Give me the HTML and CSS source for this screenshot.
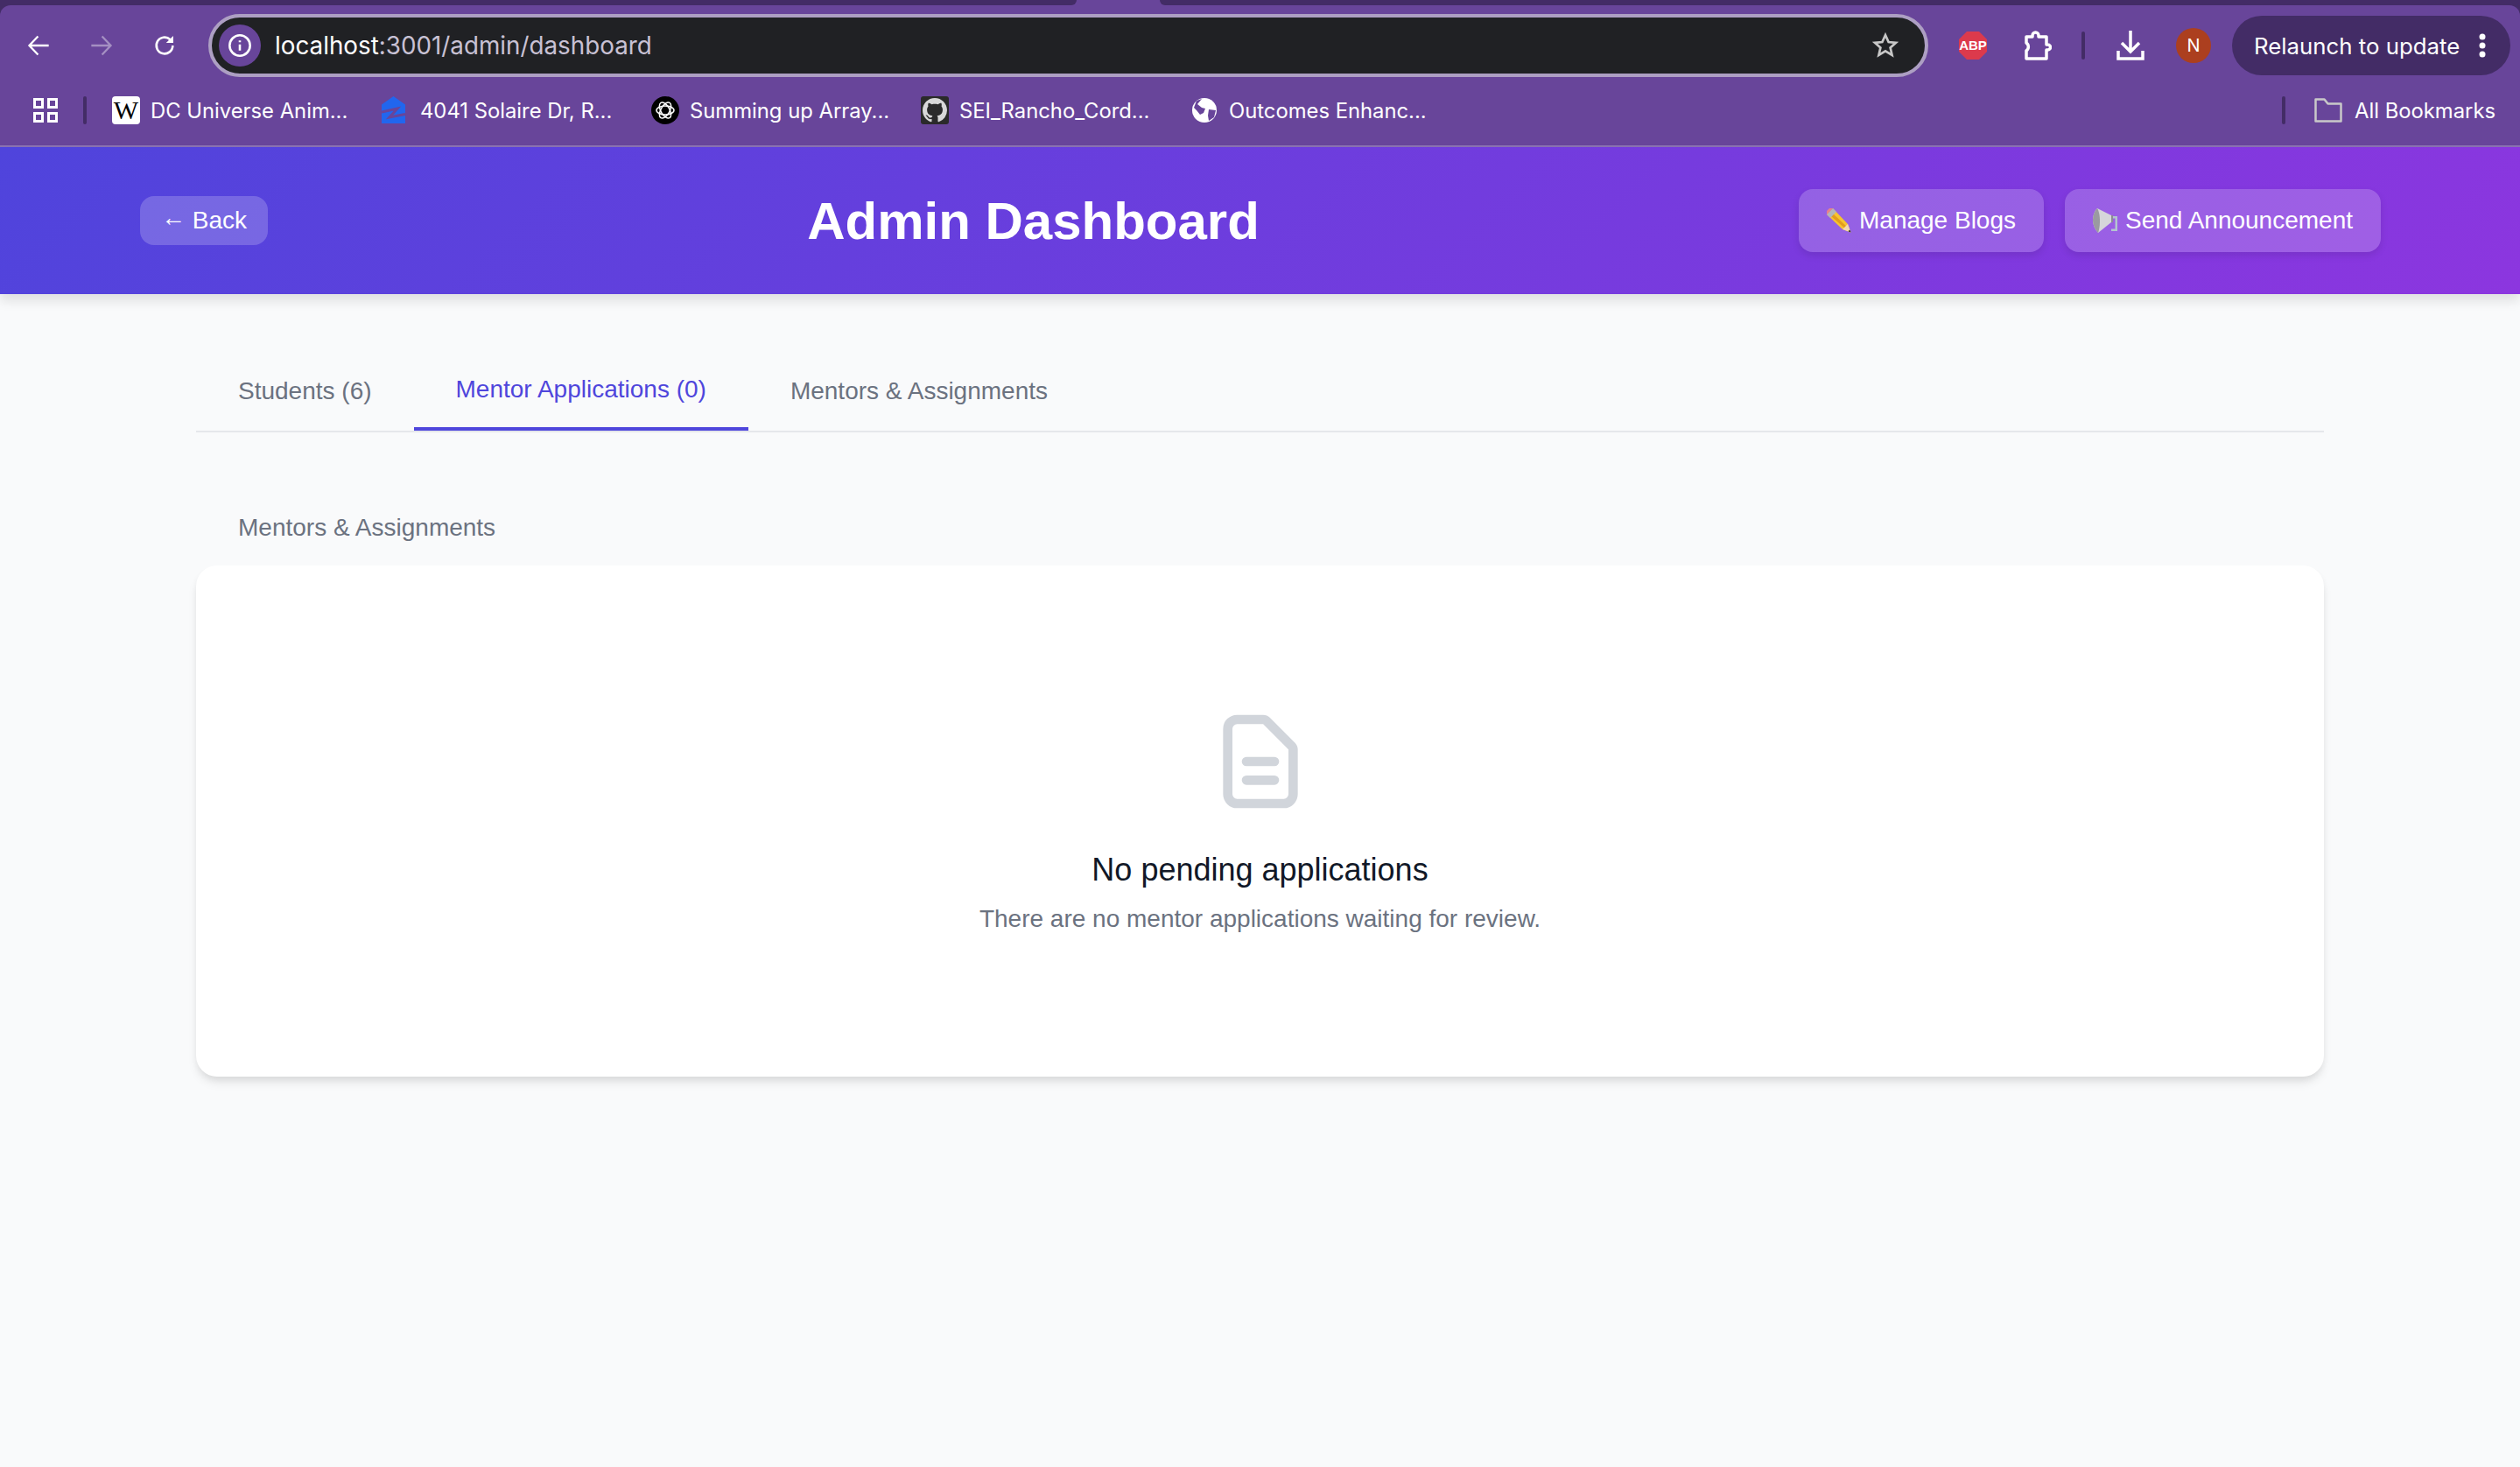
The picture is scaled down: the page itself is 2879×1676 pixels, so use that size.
FILE: index.html
```html
<!DOCTYPE html>
<html lang="en">
  <head>
    <meta charset="UTF-8" />
    <meta name="viewport" content="width=device-width, initial-scale=1.0" />
    <title>Admin Dashboard</title>
    <link rel="stylesheet" href="styles.css">
  </head>

  <body>
    <div class="browser">
      <div class="tab-strip">
        <div class="tab-strip-left"></div>
        <div class="tab-strip-right"></div>
      </div>

      <div class="toolbar">
        <div class="nav-row">
          <span class="nav-btn">
            <svg width="28" height="28" viewBox="0 0 24 24" fill="none" stroke="#fff" stroke-width="2"><path d="M22 12H3M11.5 3 3 12l8.5 9" /></svg>
          </span>
          <span class="nav-btn dim">
            <svg width="28" height="28" viewBox="0 0 24 24" fill="none" stroke="#fff" stroke-width="2"><path d="M2 12h19M12.5 3 21 12l-8.5 9" /></svg>
          </span>
          <span class="nav-btn">
            <svg width="28" height="28" viewBox="0 0 24 24" fill="none" stroke="#fff" stroke-width="2.2"><path d="M20 12a8 8 0 1 1-2.5-5.8L20 8.5" /><path d="M20.5 2.5v7h-7" fill="#fff" stroke="none" /></svg>
          </span>

          <div class="url-bar">
            <span class="site-info">
              <svg width="28" height="28" viewBox="0 0 24 24" fill="none" stroke="#fff" stroke-width="2.2"><circle cx="12" cy="12" r="10" /><path d="M12 11v6M12 7v1.8" /></svg>
            </span>
            <span class="url-text">localhost<span class="url-rest">:3001/admin/dashboard</span></span>
            <svg class="star" width="32" height="32" viewBox="0 0 24 24" fill="none" stroke="#c7c7c7" stroke-width="2"><path d="m12 3 2.7 6 6.3.6-4.8 4.2 1.5 6.4L12 16.8l-5.700 3.400 1.500-6.400L3 9.600 9.300 9z" /></svg>
          </div>

          <span class="nav-btn abp-btn">
            <svg width="36" height="36" viewBox="0 0 36 36"><polygon points="11,2 25,2 34,11 34,25 25,34 11,34 2,25 2,11" fill="#dc3a4c" /><text x="18" y="23" text-anchor="middle" class="abp-text">ABP</text></svg>
          </span>
          <span class="nav-btn ext-btn">
            <svg width="32" height="34" viewBox="0 0 32 34" fill="none" stroke="#fff" stroke-width="3.5"><path d="M3 7h7V5.500a3.500 3.500 0 0 1 7 0V7h9v9h1.500a3 3 0 0 1 0 6H26v10H3v-9a5.500 5.500 0 0 0 0-9z" stroke-linejoin="round" /></svg>
          </span>
          <span class="bar-divider"></span>
          <span class="nav-btn dl-btn">
            <svg width="34" height="36" viewBox="0 0 34 36" fill="none" stroke="#fff" stroke-width="3.5"><path d="M17 1v24M7 15l10 10 10-10M3 24v9h28v-9" /></svg>
          </span>
          <span class="avatar">N</span>
          <div class="relaunch">
            <span>Relaunch to update</span>
            <svg width="8" height="28" viewBox="0 0 8 28" fill="#fff"><circle cx="4" cy="4" r="3.5" /><circle cx="4" cy="14" r="3.5" /><circle cx="4" cy="24" r="3.5" /></svg>
          </div>
        </div>

        <div class="bookmarks">
          <svg class="apps-icon" width="28" height="28" viewBox="0 0 28 28" fill="none" stroke="#fff" stroke-width="3"><rect x="1.5" y="1.5" width="9" height="9" /><rect x="17.5" y="1.5" width="9" height="9" /><rect x="1.5" y="17.5" width="9" height="9" /><rect x="17.5" y="17.5" width="9" height="9" /></svg>
          <span class="bm-divider"></span>

          <div class="bm-list">
            <div class="bm">
              <span class="bm-wiki">W</span>
              <span>DC Universe Anim...</span>
            </div>
            <div class="bm">
              <svg width="32" height="32" viewBox="0 0 32 32"><path d="M13.5 0 27 9.500V31H0V9.500z" fill="#2166ee" /><path d="M0 18 18 14 9 24l18-3.500" fill="none" stroke="#68459a" stroke-width="3" /></svg>
              <span>4041 Solaire Dr, R...</span>
            </div>
            <div class="bm">
              <svg width="32" height="32" viewBox="0 0 32 32"><circle cx="16" cy="16" r="16" fill="#000" /><g fill="none" stroke="#fff" stroke-width="1.5"><ellipse cx="16" cy="16" rx="10" ry="5" /><ellipse cx="16" cy="16" rx="10" ry="5" transform="rotate(60 16 16)" /><ellipse cx="16" cy="16" rx="10" ry="5" transform="rotate(120 16 16)" /></g></svg>
              <span>Summing up Array...</span>
            </div>
            <div class="bm">
              <svg width="32" height="32" viewBox="0 0 32 32"><rect width="32" height="32" rx="3" fill="#2a2a2a" /><g transform="translate(2 2) scale(1.75)"><path fill="#d8d8d8" d="M8 0C3.580 0 0 3.580 0 8c0 3.540 2.290 6.530 5.470 7.590.4.070.55-.170.55-.380 0-.190-.010-.820-.010-1.490-2.010.370-2.530-.490-2.690-.940-.090-.230-.480-.940-.820-1.130-.280-.150-.680-.520-.010-.530.630-.010 1.080.580 1.230.820.720 1.210 1.870.870 2.330.660.070-.520.280-.870.510-1.070-1.780-.2-3.640-.890-3.640-3.950 0-.870.310-1.590.820-2.150-.080-.2-.360-1.020.080-2.120 0 0 .670-.210 2.200.820.640-.180 1.320-.270 2-.270.680 0 1.360.090 2 .270 1.530-1.040 2.200-.820 2.200-.820.440 1.100.160 1.920.080 2.120.510.560.820 1.270.820 2.150 0 3.070-1.870 3.750-3.650 3.950.290.250.540.730.540 1.480 0 1.070-.010 1.930-.010 2.200 0 .210.150.460.550.380A8.013 8.013 0 0016 8c0-4.420-3.580-8-8-8z" /></g></svg>
              <span>SEI_Rancho_Cord...</span>
            </div>
            <div class="bm">
              <svg width="32" height="32" viewBox="0 0 32 32"><circle cx="16" cy="16" r="14" fill="#fff" /><path d="M13 3 8 9l5 4 4 1-2 5-4 2-4-5-3-3 3-8zM21 15l8 1-2 8-6 4-1-6z" fill="#68459a" /></svg>
              <span>Outcomes Enhanc...</span>
            </div>
          </div>

          <span class="bm-divider right"></span>
          <div class="bm all-bookmarks">
            <svg width="32" height="28" viewBox="0 0 32 28" fill="none" stroke="#c9c9c9" stroke-width="2.5"><path d="M1.500 26.500V1.500h10l4 5h15v20z" stroke-linejoin="round" /></svg>
            <span>All Bookmarks</span>
          </div>
        </div>
      </div>
    </div>

    <header class="page-header">
      <a class="back-btn"><span class="back-arrow">←</span> Back</a>
      <h1 class="page-title">Admin Dashboard</h1>
      <div class="header-actions">
        <a class="action-btn">
          <svg width="28" height="28" viewBox="0 0 28 28"><path d="M0 7 7 0l17 18 3.500 9.500L18 24z" fill="#f6c42f" /><path d="M5 9l2.500-2.500L24 22l-2 2z" fill="#e39c1d" /><path d="M0 7 7 0l4 4-7 7z" fill="#b3b6bb" /><path d="M0 7 7 0 5 0H3L0 3v2z" fill="#e8808c" /><path d="M18 24l6-6 3.500 9.500z" fill="#f3d9b0" /><path d="m24.500 26.300 1.800-1.800 1.200 3z" fill="#222" /></svg>
          <span>Manage Blogs</span>
        </a>
        <a class="action-btn">
          <svg width="28" height="28" viewBox="0 0 28 28"><path d="M5 0 21 8v8L6 28C2 24 0 18 0 13S2 3 5 0z" fill="#d6d6da" /><path d="M5 0C2 3 0 8 0 13s2 11 6 15c1.500-4 2-9 2-14S7 3 5 0z" fill="#9a9aa0" /><path d="M21 8h2v8h-2z" fill="#8c8c92" /><path d="M23 9h5v17h-7v-2.500h4.500V11.500H23z" fill="#b4c4d0" /></svg>
          <span>Send Announcement</span>
        </a>
      </div>
    </header>

    <main class="content">
      <nav class="tabs">
        <a class="tab">Students (6)</a>
        <a class="tab active">Mentor Applications (0)</a>
        <a class="tab">Mentors &amp; Assignments</a>
      </nav>

      <div class="section-label">Mentors &amp; Assignments</div>

      <section class="empty-card">
        <svg width="128" height="128" viewBox="0 0 24 24" fill="none" stroke="#d1d5db" stroke-width="2" stroke-linecap="round" stroke-linejoin="round"><path d="M9 12h6m-6 4h6m2 5H7a2 2 0 01-2-2V5a2 2 0 012-2h5.586a1 1 0 01.707.293l5.414 5.414a1 1 0 01.293.707V19a2 2 0 01-2 2z" /></svg>
        <h3 class="empty-title">No pending applications</h3>
        <p class="empty-text">There are no mentor applications waiting for review.</p>
      </section>
    </main>
  </body>
</html>
```

FILE: styles.css
```css
* {
  box-sizing: border-box;
}

body {
  margin: 0;
  min-height: 1676px;
  background: #f9fafb;
  font-family: "Liberation Sans", Arial, sans-serif;
}

/* browser chrome */
.browser {
  background: #432c66;
  font-family: Inter, "Noto Sans", sans-serif;
  color: #fff;
}

.tab-strip {
  display: flex;
  height: 6px;
  background: #68459a;
  justify-content: space-between;
}

.tab-strip-left {
  width: 1230px;
  background: #432c66;
  border-bottom-right-radius: 6px;
}

.tab-strip-right {
  width: 1554px;
  background: #432c66;
  border-bottom-left-radius: 6px;
}

.toolbar {
  height: 162px;
  padding-top: 10px;
  background: #68459a;
  border-bottom: 2px solid #8b72b2;
  border-radius: 12px 12px 0 0;
}

.nav-row {
  display: flex;
  align-items: center;
  height: 72px;
  padding: 0 11px 0 8px;
}

.nav-btn {
  display: flex;
  flex: none;
  align-items: center;
  justify-content: center;
  width: 72px;
  height: 72px;
}

.nav-btn.dim {
  opacity: 0.4;
}

.url-bar {
  display: flex;
  flex: 1;
  align-items: center;
  height: 72px;
  margin-left: 14px;
  padding: 0 29px 0 8px;
  background: #202124;
  border: 4px solid #ad9fc3;
  border-radius: 36px;
}

.site-info {
  display: flex;
  flex: none;
  align-items: center;
  justify-content: center;
  width: 48px;
  height: 48px;
  background: #68459a;
  border-radius: 50%;
}

.url-text {
  flex: 1;
  margin-left: 16px;
  font-size: 27.8px;
  color: #fff;
}

.url-rest {
  color: #c8c1d4;
}

.abp-btn {
  margin-left: 15px;
}

.abp-text {
  font-family: "Liberation Sans", sans-serif;
  font-size: 15px;
  font-weight: 700;
  fill: #fff;
}

.ext-btn {
  margin-left: 2px;
}

.bar-divider {
  flex: none;
  width: 4px;
  height: 32px;
  margin-left: 14px;
  background: #432c66;
  border-radius: 2px;
}

.dl-btn {
  margin-left: 16px;
}

.avatar {
  display: flex;
  flex: none;
  align-items: center;
  justify-content: center;
  width: 40px;
  height: 40px;
  margin-left: 16px;
  background: #ac3f1f;
  border-radius: 50%;
  font-size: 20px;
}

.relaunch {
  display: flex;
  flex: none;
  align-items: center;
  justify-content: space-between;
  width: 318px;
  height: 68px;
  margin-left: 24px;
  padding: 0 28px 0 25px;
  background: #432c66;
  border-radius: 34px;
  font-size: 25.8px;
}

.bookmarks {
  display: flex;
  align-items: center;
  height: 32px;
  margin-top: 22px;
  padding: 0 28px 0 38px;
  font-size: 23.8px;
}

.bm-divider {
  width: 4px;
  height: 32px;
  margin-left: 29px;
  background: #432c66;
  border-radius: 2px;
}

.bm-divider.right {
  margin-left: auto;
}

.bm-list {
  display: flex;
  margin-left: 29px;
}

.bm {
  display: flex;
  align-items: center;
  gap: 12px;
  white-space: nowrap;
}

.bm-list .bm {
  width: 308px;
}

.bm svg {
  flex: none;
}

.bm-wiki {
  display: flex;
  align-items: center;
  justify-content: center;
  width: 32px;
  height: 32px;
  background: #fff;
  border-radius: 4px;
  color: #000;
  font-family: "Liberation Serif", serif;
  font-size: 30px;
}

.all-bookmarks {
  margin-left: 33px;
  gap: 14px;
}

/* page header */
.page-header {
  display: flex;
  align-items: center;
  justify-content: space-between;
  height: 168px;
  padding: 0 159px 0 160px;
  background: linear-gradient(135deg, #4f44dc, #8c36df);
  box-shadow: 0 8px 12px rgba(0, 0, 0, 0.1);
  color: #fff;
}

.page-title {
  margin: 0;
  padding-top: 2px;
  font-size: 60px;
  line-height: 72px;
  font-weight: 700;
}

.back-btn {
  padding: 8px 24px;
  background: rgba(255, 255, 255, 0.2);
  border-radius: 16px;
  font-size: 28px;
  line-height: 40px;
}

.back-arrow {
  position: relative;
  top: -3px;
}

.header-actions {
  display: flex;
  gap: 24px;
}

.action-btn {
  display: flex;
  align-items: center;
  gap: 9px;
  height: 72px;
  padding: 0 32px;
  background: rgba(255, 255, 255, 0.2);
  border-radius: 16px;
  box-shadow: 0 4px 8px rgba(0, 0, 0, 0.1);
  font-size: 28px;
}

/* content */
.content {
  padding: 64px 224px 0;
}

.tabs {
  display: flex;
  border-bottom: 2px solid #e5e7eb;
}

.tab {
  display: flex;
  align-items: center;
  height: 92px;
  padding: 2px 48px 0;
  font-size: 28px;
  color: #6b7280;
}

.tab.active {
  border-bottom: 4px solid #4f46dc;
  color: #4f46dc;
}

.section-label {
  margin: 87px 0 21px;
  padding: 0 48px;
  font-size: 28px;
  line-height: 44px;
  color: #6b7280;
}

.empty-card {
  display: flex;
  flex-direction: column;
  align-items: center;
  padding: 160px 48px;
  background: #fff;
  border-radius: 24px;
  box-shadow: 0 8px 12px -2px rgba(0, 0, 0, 0.1), 0 4px 8px -2px rgba(0, 0, 0, 0.06);
}

.empty-title {
  margin: 32px 0 8px;
  font-size: 36px;
  line-height: 56px;
  font-weight: 400;
  color: #111827;
}

.empty-text {
  margin: 0;
  font-size: 28px;
  line-height: 40px;
  color: #6b7280;
}
```
